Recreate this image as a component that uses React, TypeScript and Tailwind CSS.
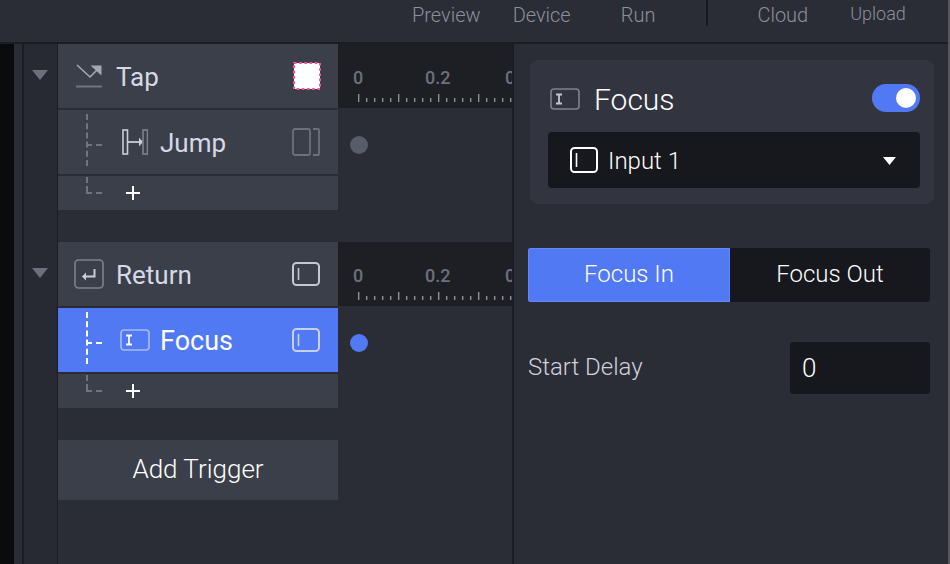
import React from "react";

type IconProps = { className?: string };

const InputIcon = ({ className, tall }: IconProps & { tall?: boolean }) => {
  const h = tall ? 26 : 24;
  return (
    <svg width="28" height={h} viewBox={`0 0 28 ${h}`} fill="none" stroke="currentColor" className={className}>
      <rect x="1" y="1" width="26" height={h - 2} rx="3.5" strokeWidth="2" />
      <path d={`M6.5 6v${h - 12}`} strokeWidth="1.6" />
    </svg>
  );
};

const FocusIcon = ({ className, lineClass }: IconProps & { lineClass: string }) => (
  <svg width="30" height="22" viewBox="0 0 30 22" fill="none" className={className}>
    <rect x="1" y="1" width="28" height="20" rx="3" stroke="currentColor" strokeWidth="1.6" className={lineClass} />
    <path d="M6 6.5h6M6 15.5h6M9 6.5v9" stroke="currentColor" strokeWidth="1.8" />
  </svg>
);

const Caret = () => (
  <div className="flex w-[32px] justify-center pt-[26px]">
    <svg width="16" height="10" viewBox="0 0 16 10" className="text-[#6c707c]">
      <path d="M0 0h16L8 10z" fill="currentColor" />
    </svg>
  </div>
);

const Connector = ({ light }: { light?: boolean }) => {
  const color = light ? "#ffffff" : "#6f7480";
  return (
    <svg width="20" height="54" viewBox="0 0 20 54" fill="none" stroke={color} strokeWidth="2" className="absolute left-[28px] top-[4px]">
      <path d="M1 0v56" strokeDasharray="6 3.2" />
      <path d="M1 31h5M10 31h6" />
    </svg>
  );
};

const PlusRow = () => (
  <div className="relative h-[34px] bg-[#3b3f4a]">
    <svg width="20" height="20" viewBox="0 0 20 20" fill="none" stroke="#6f7480" strokeWidth="2" className="absolute left-[28px] top-0">
      <path d="M1 1v6M1 10v7h5M10 17h6" />
    </svg>
    <svg width="14" height="14" viewBox="0 0 14 14" fill="none" stroke="#ffffff" strokeWidth="2" className="absolute left-[68px] top-[10px]">
      <path d="M7 0v14M0 7h14" />
    </svg>
  </div>
);

const Ruler = () => {
  const ticks = Array.from({ length: 20 }, (_, i) => i);
  return (
    <div className="h-[64px] w-[174px] overflow-hidden bg-[#1d1f25]">
      <div className="relative h-[64px] font-['Roboto',sans-serif] text-[18px] font-medium text-[#6d717c]">
        <span className="absolute left-[15px] top-[24px] leading-[20px]">0</span>
        <span className="absolute left-[87px] top-[24px] leading-[20px]">0.2</span>
        <span className="absolute left-[167px] top-[24px] leading-[20px]">0</span>
        <svg width="174" height="64" className="absolute left-0 top-0">
          {ticks.map((i) => (
            <rect key={i} x={20 + i * 8} y={i % 5 === 0 ? 50 : 54} width="1.4" height={i % 5 === 0 ? 8 : 4} fill="#8b8f99" />
          ))}
        </svg>
      </div>
    </div>
  );
};

const Dot = ({ className }: IconProps) => (
  <div className="flex h-[74px] items-center pl-[12px]">
    <div className={`h-[18px] w-[18px] rounded-full ${className}`} />
  </div>
);

export default function App() {
  return (
    <div className="flex h-[564px] w-[950px] overflow-hidden bg-[#2a2c36] font-['Roboto',sans-serif]">
      <div className="flex w-[948px] flex-col">
        {/* Top bar */}
        <div className="flex h-[44px] items-start border-b-2 border-[#1b1d23] text-[20px] font-light text-[#8c909b]">
          <span className="ml-[412px] mt-[2px] leading-[26px]">Preview</span>
          <span className="ml-[32px] mt-[2px] leading-[26px]">Device</span>
          <span className="ml-[50px] mt-[2px] leading-[26px]">Run</span>
          <div className="ml-[51px] h-[26px] w-[2px] bg-[#16181d]" />
          <span className="ml-[49px] mt-[2px] leading-[26px]">Cloud</span>
          <span className="ml-[42px] mt-[1px] text-[18px] leading-[26px]">Upload</span>
        </div>

        <div className="flex flex-1">
          {/* Far left gutter */}
          <div className="w-[14px] bg-[#0a0b0d]" />
          <div className="w-[8px] bg-[#2a2d36]" />
          <div className="w-[2px] bg-[#1b1d23]" />

          {/* Trigger list */}
          <div className="flex w-[314px]">
            <div className="flex w-[34px] flex-col border-r border-[#1b1d23] bg-[#282a33]">
              <div className="h-[198px]">
                <Caret />
              </div>
              <Caret />
            </div>
            <div className="flex w-[280px] flex-col">
              <div className="flex h-[64px] items-center bg-[#3b3f4a] pl-[18px] pr-[16px] text-[26px] text-[#d5d9e6]">
                <svg width="26" height="24" viewBox="0 0 26 24" fill="none" stroke="#a3a8b4" strokeWidth="1.6">
                  <path d="M1 1l13 12 9-9" />
                  <path d="M14.500 1.500h11v10z" fill="#a3a8b4" strokeWidth="0" />
                  <path d="M0 22.500h26" stroke="#6f7480" strokeWidth="2" />
                </svg>
                <span className="ml-[14px] mt-[2px] leading-[30px]">Tap</span>
                <svg width="28" height="28" viewBox="0 0 28 28" className="ml-auto mr-[1px]">
                  <rect x="1" y="1" width="26" height="26" fill="#ffffff" stroke="#ff4fa0" strokeWidth="2" strokeDasharray="2.600 2.600" />
                </svg>
              </div>
              <div className="relative mt-[2px] flex h-[64px] items-center bg-[#3b3f4a] pl-[64px] pr-[18px] text-[26px] text-[#d5d9e6]">
                <Connector />
                <svg width="26" height="26" viewBox="0 0 26 26" fill="none">
                  <rect x="1" y="1" width="4.5" height="24" stroke="#c9cdd8" strokeWidth="1.6" />
                  <path d="M6 13h12" stroke="#c9cdd8" strokeWidth="1.8" />
                  <path d="M17 8.500l4 4.500-4 4.500z" fill="#c9cdd8" />
                  <rect x="21" y="1" width="4.500" height="24" stroke="#7d828e" strokeWidth="1.6" />
                </svg>
                <span className="ml-[12px] mt-[2px] leading-[30px]">Jump</span>
                <svg width="28" height="28" viewBox="0 0 28 28" fill="none" stroke="#6c717d" strokeWidth="1.8" className="ml-auto">
                  <rect x="1" y="1" width="17" height="26" rx="2" />
                  <path d="M21 1h5a1 1 0 0 1 1 1v24a1 1 0 0 1-1 1h-5" />
                </svg>
              </div>
              <div className="mt-[2px]">
                <PlusRow />
              </div>

              <div className="mt-[32px] flex h-[64px] items-center bg-[#3b3f4a] pl-[16px] pr-[18px] text-[26px] text-[#d5d9e6]">
                <svg width="30" height="30" viewBox="0 0 30 30" fill="none">
                  <rect x="1" y="1" width="28" height="28" rx="3.500" stroke="#7d828e" strokeWidth="1.6" />
                  <path d="M20.500 10v7.500H11" stroke="#c9cdd8" strokeWidth="2" />
                  <path d="M12 13.500v8L8 17.500z" fill="#c9cdd8" />
                </svg>
                <span className="ml-[12px] mt-[2px] leading-[30px]">Return</span>
                <InputIcon className="ml-auto text-[#c4c8d2]" />
              </div>
              <div className="relative mt-[2px] flex h-[64px] items-center bg-[#5279f4] pl-[62px] pr-[18px] text-[26px] text-white">
                <Connector light />
                <FocusIcon className="text-white" lineClass="text-[#a6bcfa]" />
                <span className="ml-[10px] mt-[2px] text-[27px] leading-[30px]">Focus</span>
                <InputIcon className="ml-auto text-[#c8cfe6]" />
              </div>
              <div className="mt-[2px]">
                <PlusRow />
              </div>

              <div className="mt-[32px] flex h-[60px] items-center justify-center bg-[#3b3f4a] pb-[2px] text-[26px] font-light text-white">
                Add Trigger
              </div>
            </div>
          </div>

          {/* Timeline */}
          <div className="flex w-[174px] flex-col">
            <Ruler />
            <Dot className="bg-[#575c69]" />
            <div className="h-[60px]" />
            <Ruler />
            <Dot className="bg-[#5279f4]" />
          </div>

          {/* Properties */}
          <div className="flex w-[434px] flex-col border-l-2 border-[#1b1d23] pl-[14px] pr-[16px]">
            <div className="ml-[2px] mt-[16px] h-[144px] w-[404px] rounded-[8px] bg-[#323540] pl-[20px] pr-[14px] pt-[24px]">
              <div className="flex h-[32px] items-center">
                <FocusIcon className="-mt-[2px] text-[#c4c8d2]" lineClass="text-[#7d828e]" />
                <span className="ml-[14px] text-[30px] font-light leading-[32px] text-white">Focus</span>
                <div className="ml-auto -mt-[4px] flex h-[28px] w-[48px] items-center justify-end rounded-full bg-[#5279f4] pr-[4px]">
                  <div className="h-[20px] w-[20px] rounded-full bg-white" />
                </div>
              </div>
              <div className="-ml-[2px] mt-[16px] flex h-[56px] items-center rounded-[4px] bg-[#16181d] pl-[22px] pr-[24px]">
                <InputIcon tall className="text-white" />
                <span className="ml-[10px] mt-[2px] text-[24px] font-light text-white">Input 1</span>
                <svg width="13" height="8" viewBox="0 0 13 8" className="ml-auto mt-[1px]">
                  <path d="M0 0h13L6.500 8z" fill="#ffffff" />
                </svg>
              </div>
            </div>

            <div className="mt-[44px] flex h-[54px] overflow-hidden rounded-[3px] text-[24px] font-light text-white">
              <div className="flex w-[202px] items-center justify-center border border-[#6187f8] bg-[#5279f4] pb-[2px]">Focus In</div>
              <div className="flex flex-1 items-center justify-center bg-[#16181d] pb-[2px]">Focus Out</div>
            </div>

            <div className="mt-[40px] flex h-[52px] items-center justify-between">
              <span className="-mt-[2px] text-[24px] font-light text-[#cfd2dc]">Start Delay</span>
              <div className="flex h-[52px] w-[140px] items-center rounded-[3px] bg-[#16181d] pl-[12px] text-[26px] font-light text-white">
                0
              </div>
            </div>
          </div>
        </div>
      </div>
      <div className="w-[2px] bg-[#55565e]" />
    </div>
  );
}
